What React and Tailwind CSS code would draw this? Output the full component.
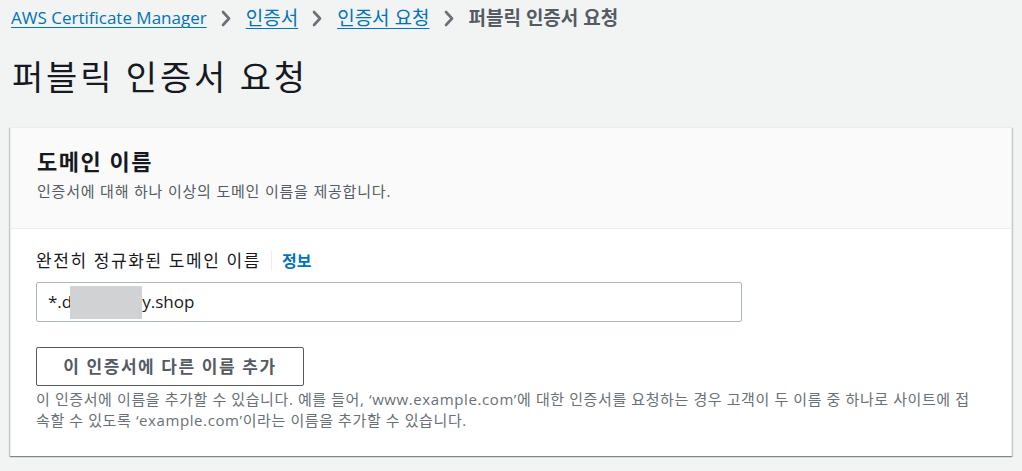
const FONT = { fontFamily: '"Open Sans", "Noto Sans CJK KR", sans-serif' };

const CRUMBS = [
  { label: "AWS Certificate Manager", link: true, latin: true },
  { label: "인증서", link: true },
  { label: "인증서 요청", link: true },
  { label: "퍼블릭 인증서 요청", link: false },
];

function Chevron() {
  return (
    <svg width="10" height="17" viewBox="0 0 10 17" className="text-[#687078] shrink-0">
      <polyline points="2,2 8,8.5 2,15" fill="none" stroke="currentColor" strokeWidth="2.6" strokeLinecap="round" strokeLinejoin="round" />
    </svg>
  );
}

function Breadcrumbs() {
  return (
    <nav className="flex items-center pl-[11px] pt-[2px] h-[34px]">
      {CRUMBS.map((c, i) => (
        <div key={c.label} className="flex items-center">
          {c.link ? (
            <a
              className={
                "text-[#0073bb] underline underline-offset-[3px] decoration-1 " +
                (c.latin ? "text-[17px]" : "text-[19px]")
              }
            >
              {c.label}
            </a>
          ) : (
            <span className="text-[19px] text-[#545b64] font-bold">{c.label}</span>
          )}
          {i < CRUMBS.length - 1 && (
            <span className="flex items-center pl-[14px] pr-[15px]">
              <Chevron />
            </span>
          )}
        </div>
      ))}
    </nav>
  );
}

export default function App() {
  return (
    <div className="w-[1022px] h-[471px] overflow-hidden bg-[#f2f3f3] text-[#16191f]" style={FONT}>
      <Breadcrumbs />
      <h1 className="pl-[12px] pt-[21px] text-[34px] leading-[44px] font-normal tracking-[2.8px]">퍼블릭 인증서 요청</h1>

      <section className="mx-[10px] mt-[28px] bg-white border border-[#eaeded] border-b-0 shadow-[0_1px_1px_0_rgba(0,28,36,0.3),1px_1px_1px_0_rgba(0,28,36,0.15),-1px_1px_1px_0_rgba(0,28,36,0.15)]">
        <header className="bg-[#fafafa] border-b border-[#eaeded] px-[26px] pt-[18px] pb-[26px]">
          <h2 className="text-[22px] leading-[30px] font-bold tracking-[1.5px]">도메인 이름</h2>
          <p className="text-[15px] leading-[22px] text-[#545b64] mt-[4px] tracking-[0.8px]">
            인증서에 대해 하나 이상의 도메인 이름을 제공합니다.
          </p>
        </header>

        <div className="px-[25px] pt-[20px] pb-[25px]">
          <div className="flex items-center gap-[10px] h-[24px]">
            <span className="text-[17px] tracking-[1.6px]">완전히 정규화된 도메인 이름</span>
            <span className="w-px h-[20px] bg-[#eaeded]" />
            <a className="text-[16px] font-bold text-[#0073bb]">정보</a>
          </div>

          <div className="mt-[9px] w-[706px] h-[40px] border border-[#aab7b8] rounded-[2px] flex items-center pl-[11px] text-[17px]">
            <span>*.d</span>
            <span className="inline-block w-[72px] h-[33px] bg-[#d1d2d3] -ml-[2px]" />
            <span>y.shop</span>
          </div>

          <button className="mt-[25px] w-[268px] h-[39px] border border-[#545b64] rounded-[2px] text-[17px] font-bold text-[#545b64] tracking-[1.6px]">
            이 인증서에 다른 이름 추가
          </button>

          <p className="mt-[3px] w-[944px] text-[15px] leading-[21px] text-[#687078] tracking-[0.6px]">
            이 인증서에 이름을 추가할 수 있습니다. 예를 들어, ‘www.example.com’에 대한 인증서를 요청하는 경우 고객이 두 이름 중 하나로 사이트에 접속할 수 있도록 ‘example.com’이라는 이름을 추가할 수 있습니다.
          </p>
        </div>
      </section>
    </div>
  );
}
